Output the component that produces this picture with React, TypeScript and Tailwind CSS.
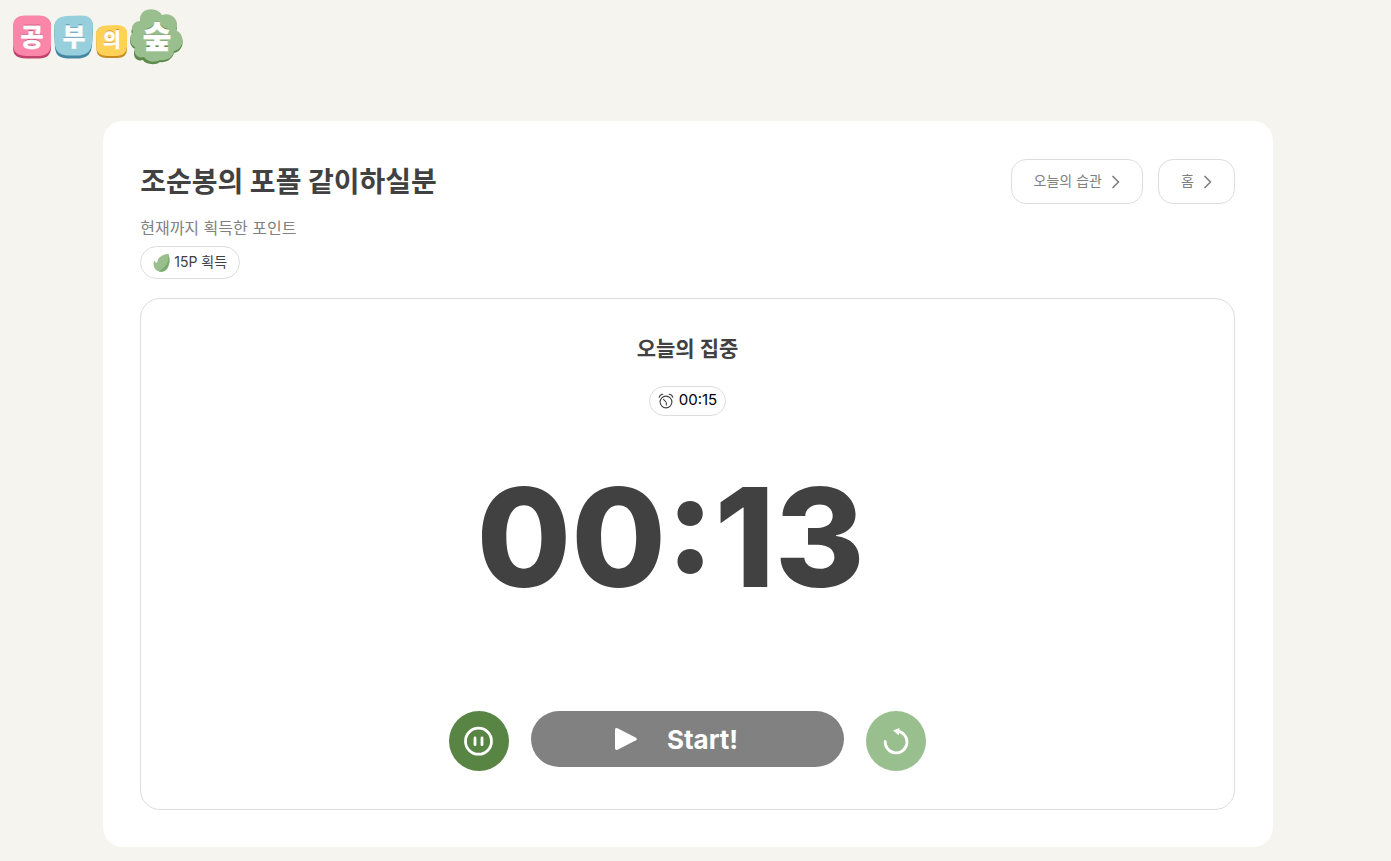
import React from "react";

function Logo() {
  return (
    <svg width="172" height="58" viewBox="12 8 172 58" fill="none" role="img" aria-label="공부의 숲">
      <path d="M13 26Q13.500 18 24 17H40Q51 17 51 26V47Q51 58.500 39 58.500H26Q13 58.500 13 48Z" fill="#c2436f" />
      <path d="M13 25Q13.500 16 24 15.500H39Q50 15.500 51 25V44Q51 55.500 39 56H27Q13.500 56 13 45Z" fill="#fa86a9" />
      <path d="M54 28Q55 17 66 17H82Q93 17 93 27L92 46Q91 57.500 80 58.500H68Q56 58.500 55 48Z" fill="#4487a3" />
      <path d="M54 27Q55 16.500 66 16L81 15.500Q92.500 15.500 93 25L92 44Q91 54 80 55.500H68Q56 55 55 45Z" fill="#98cfdc" />
      <path d="M96 34Q97 26 106 26H117Q127 26 127 35V49Q127 58 117 58H107Q97 58 96.500 50Z" fill="#c78b20" />
      <path d="M96 33Q98 26 106 25.500L116 25Q127 25 127 33V47Q126 55.500 117 56H107Q97 55.500 96.500 48Z" fill="#ffd156" />
      <path
        d="M140 24C139 14 147 11 153 12Q159 12 162 17C170 14 178 20 177 28Q176 31 177 33C183 36 184 44 181 48Q179 52 174 53C172 60 165 63 160 62C155 66 145 64 143 60C136 62 132 56 135 49C129 46 129 38 132 34C130 29 134 23 140 24Z"
        fill="#5d8a4c"
      />
      <path
        d="M140 21C139 12 147 8.500 153 9.500Q159 10 162 15C170 12 178 18 177 26Q176 29 177 31C183 34 184 42 181 46Q179 50 174 51C173 58 166 61 160 60C155 63 147 62 144 57C137 59 133 53 135 47C129 44 129 36 133 32C130 27 134 21 140 21Z"
        fill="#9abf8e"
      />
      <g fontFamily='"Noto Sans CJK KR", sans-serif' fontWeight="900" textAnchor="middle" strokeWidth="0.4" strokeLinejoin="round">
        <g fontSize="25">
          <text x="32" y="45" fill="#c2436f">공</text>
          <text x="32" y="46" fill="#fff" stroke="#fff">공</text>
          <text x="74" y="45" fill="#4487a3">부</text>
          <text x="74" y="46" fill="#fff" stroke="#fff">부</text>
        </g>
        <g fontSize="19">
          <text x="112" y="46" fill="#c78b20">의</text>
          <text x="112" y="47" fill="#fff" stroke="#fff">의</text>
        </g>
        <g fontSize="31">
          <text x="157" y="47" fill="#5d8a4c">숲</text>
          <text x="157" y="48" fill="#fff" stroke="#fff">숲</text>
        </g>
      </g>
    </svg>
  );
}

function Chevron() {
  return (
    <svg width="8" height="14" viewBox="0 0 8 14" fill="none" stroke="#818181" strokeWidth="1.7" aria-hidden="true">
      <path d="M1 1.500L6.500 7L1 12.500" strokeLinecap="round" strokeLinejoin="round" />
    </svg>
  );
}

function Leaf() {
  return (
    <svg width="17" height="18" viewBox="0 0 17 18" aria-hidden="true">
      <path d="M14.500 0C8 1 4.500 4 4.300 8.500Q3.600 9.200 2.800 8.500Q2 7.500 1.200 6.500C-1 12.500 2.500 17.800 8 17.800C14.500 17.800 18.500 10 15.500 0Z" fill="#9abf8e" />
      <path d="M15.500 0C16 8 13 13.500 5.500 17.200C13 19.800 18.800 11 15.500 0Z" fill="#79ac6b" />
    </svg>
  );
}

function AlarmClock() {
  return (
    <svg width="16" height="16" viewBox="0 0 16 16" fill="none" stroke="#414141" strokeLinecap="round" aria-hidden="true">
      <circle cx="8" cy="9" r="5.900" strokeWidth="1.100" />
      <path d="M8.300 9.700V12M8 9L5.500 6.300" strokeWidth="1.100" />
      <path d="M1.200 4.300Q2 1.600 4.800 1.300M14.800 4.300Q14 1.600 11.200 1.300" strokeWidth="1.100" />
    </svg>
  );
}

function NavLink({ children }: { children: React.ReactNode }) {
  return (
    <a href="#" className="flex h-[45px] items-center gap-2.5 rounded-[15px] border border-[#dddddd] px-[22px] text-sm text-[#818181]">
      <span className="-mt-0.5">{children}</span>
      <Chevron />
    </a>
  );
}

export default function App() {
  return (
    <div className="min-h-screen bg-[#f5f4ef] pb-3.5 pr-[15px] font-['Inter','Noto_Sans_CJK_KR',sans-serif] text-[#414141]">
      <header className="px-3 pt-2">
        <a href="#" className="inline-block align-top">
          <Logo />
        </a>
      </header>
      <main className="mx-auto mt-[55px] w-[85%] rounded-[20px] bg-white py-[37px] pr-[38px] pl-[37px]">
        <div className="flex items-start justify-between">
          <div>
            <h1 className="pt-1 text-[28px] leading-10 font-bold">조순봉의 포폴 같이하실분</h1>
            <p className="mt-3.5 text-base leading-6 text-[#818181]">현재까지 획득한 포인트</p>
            <div className="mt-1.5 flex h-[33px] w-fit items-center gap-1 rounded-full border border-[#dddddd] px-3 text-sm">
              <Leaf />
              <span className="-mt-0.5">15P 획득</span>
            </div>
          </div>
          <nav className="flex gap-[15px] pt-px">
            <NavLink>오늘의 습관</NavLink>
            <NavLink>홈</NavLink>
          </nav>
        </div>
        <section className="mt-[19px] flex flex-col items-center rounded-[20px] border border-[#dddddd] pt-[34px] pb-[38px]">
          <h2 className="text-[21px] leading-8 font-bold">오늘의 집중</h2>
          <div className="mt-[21px] flex h-[30px] items-center gap-[5px] rounded-full border border-[#dddddd] px-2 text-[15px] text-black">
            <AlarmClock />
            <span className="-mt-0.5">00:15</span>
          </div>
          <div role="timer" className="mt-[37px] w-[422px] text-[137px] leading-[168px] font-extrabold">
            00:13
          </div>
          <div className="mt-[90px] flex items-start gap-[22px]">
            <button type="button" aria-label="Pause" className="grid size-[60px] place-items-center rounded-full bg-[#588544]">
              <svg width="30" height="30" viewBox="0 0 30 30" fill="none" stroke="#fff" aria-hidden="true">
                <circle cx="14.500" cy="15.200" r="13" strokeWidth="2.800" />
                <path d="M11 12V18.700M18 12V18.700" strokeWidth="2.800" strokeLinecap="round" />
              </svg>
            </button>
            <button type="button" className="flex h-14 w-[313px] items-center justify-center gap-[30px] rounded-full bg-[#818181] pr-[22px] text-[26px] font-bold text-white">
              <svg width="22" height="22" viewBox="0 0 22 22" fill="#fff" aria-hidden="true">
                <path d="M0 1.500Q.3-.5 2.500.3L21 9.700Q22.700 11 21 12.300L2.500 21.700Q.3 22.500 0 20.500Z" />
              </svg>
              <span>Start!</span>
            </button>
            <button type="button" aria-label="Reset" className="grid size-[60px] place-items-center rounded-full bg-[#9abf8e]">
              <svg width="30" height="30" viewBox="0 0 30 30" fill="none" aria-hidden="true">
                <path d="M4.200 15.500A10.900 10.900 0 1 0 16.500 5.200" stroke="#fff" strokeWidth="2.800" strokeLinecap="round" />
                <path d="M12 4.500L18.500 2L17.800 9.300Z" fill="#fff" />
              </svg>
            </button>
          </div>
        </section>
      </main>
    </div>
  );
}
